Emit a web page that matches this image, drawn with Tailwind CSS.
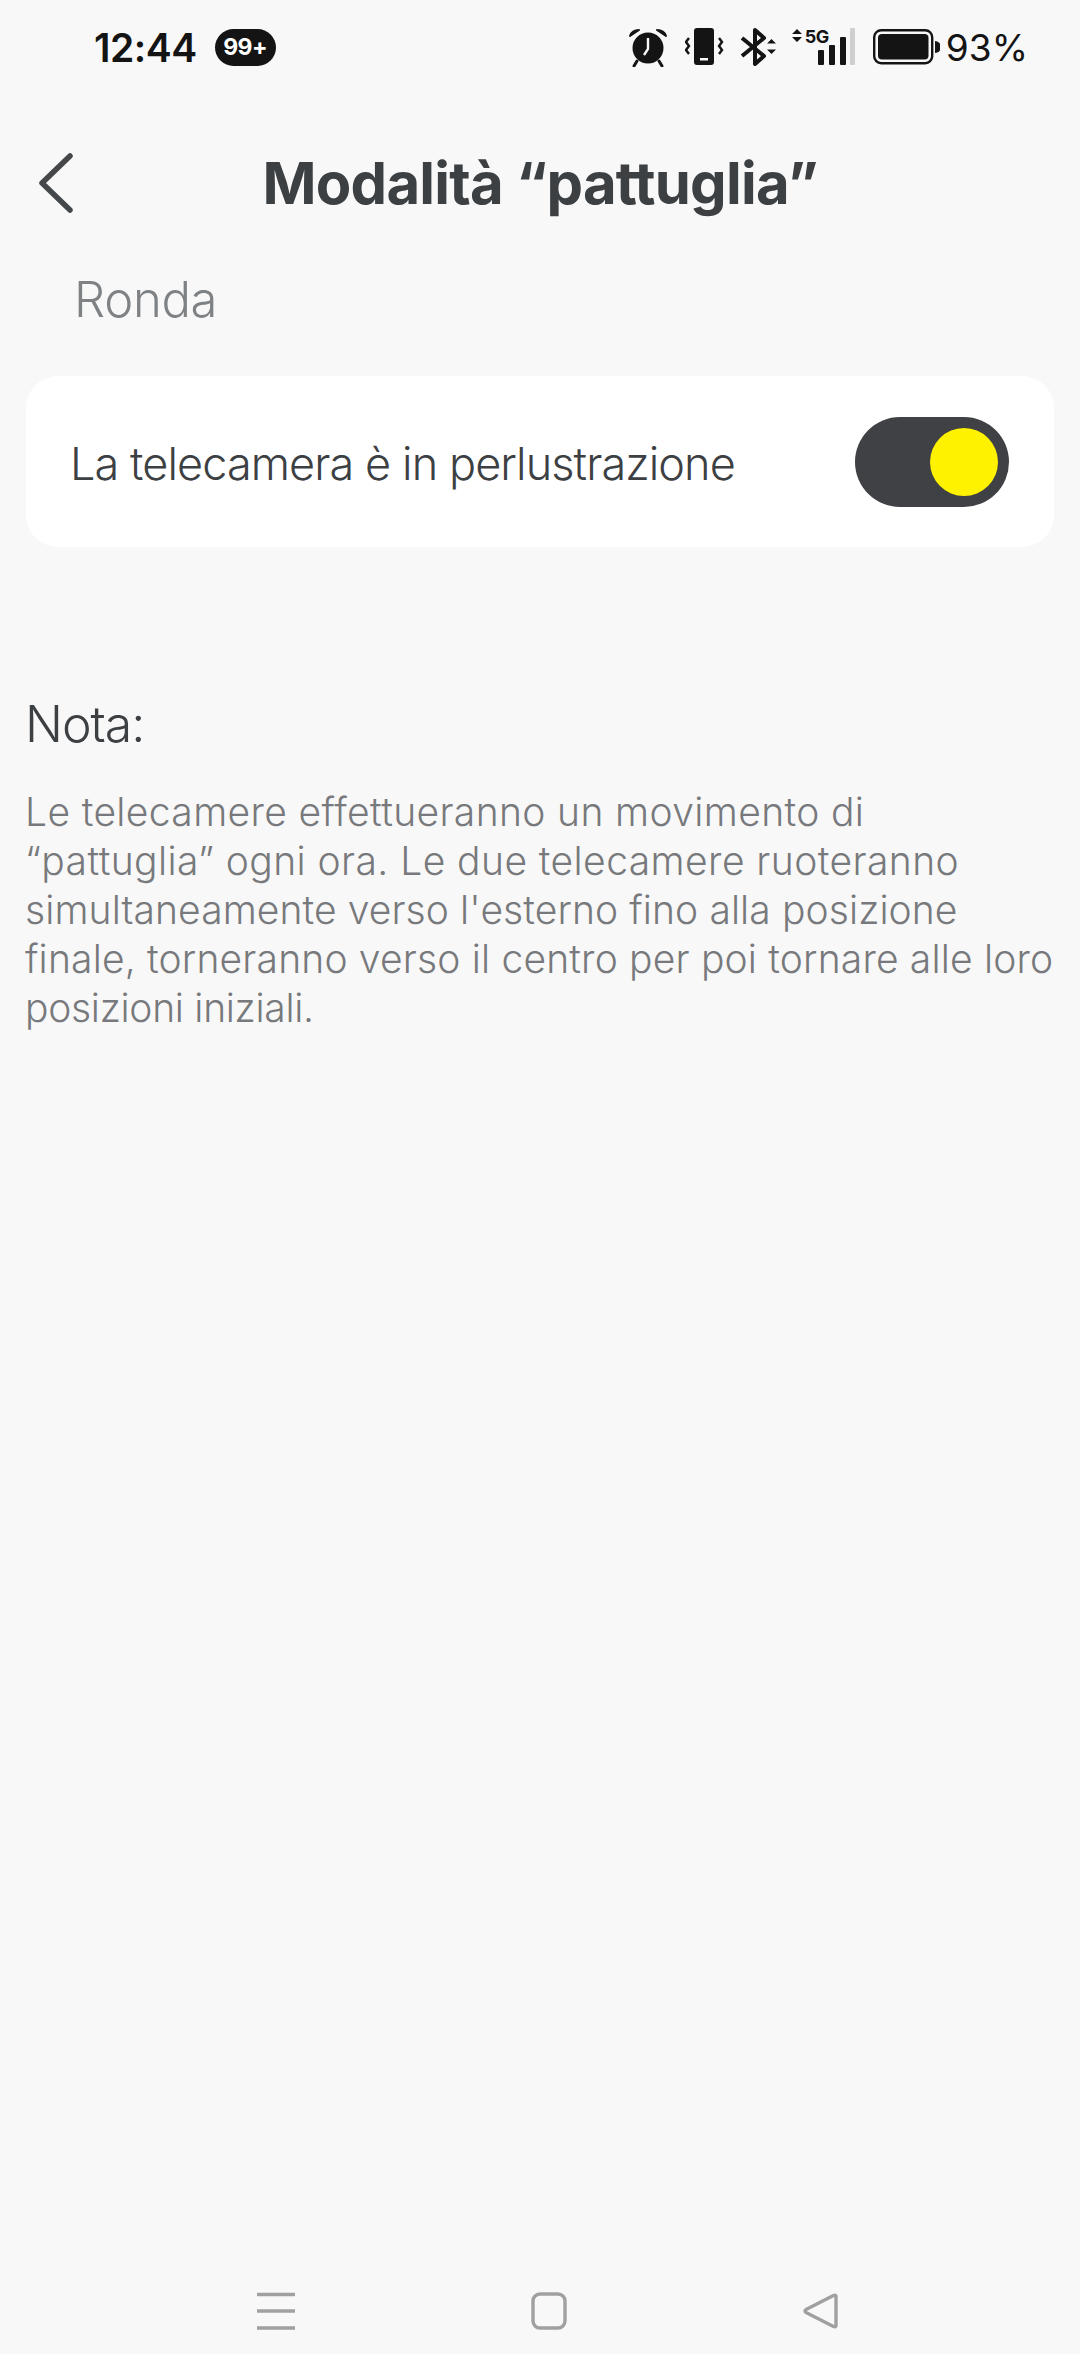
<!DOCTYPE html>
<html lang="it"><head><meta charset="utf-8"><script src="https://cdn.jsdelivr.net/npm/@tailwindcss/browser@4"></script></head>
<body class="m-0">
<div class="w-[1080px] h-[2354px] bg-[#f8f8f8] flex flex-col font-['Inter',sans-serif] overflow-hidden">
  <!-- status bar -->
  <div class="h-[94px] flex items-center justify-between pl-[94px] pr-[52px] text-[#141414]">
    <div class="flex items-center gap-[18px]">
      <span class="text-[39px] leading-none font-semibold tracking-[-0.5px]">12:44</span>
      <span class="w-[61px] h-[37px] rounded-full bg-[#141414] text-white text-[23px] font-bold flex items-center justify-center tracking-[-0.5px]">99+</span>
    </div>
    <div class="flex items-center">
      <svg width="40" height="40" viewBox="0 0 40 40" class="mr-[17px]"><circle cx="20" cy="21" r="15.500" fill="#141414"/><path d="M20 11v11l-4 6" stroke="#f8f8f8" stroke-width="2.400" fill="none"/><path d="M2 9q2-6 9-6zM38 9q-2-6-9-6z" fill="#141414" stroke="#141414" stroke-width="2" stroke-linejoin="round"/><path d="M9 34l-3 5M31 34l3 5" stroke="#141414" stroke-width="3" stroke-linecap="round"/></svg>
      <svg width="40" height="38" viewBox="0 0 40 38" class="mr-[15px]"><rect x="9" y="0" width="20" height="37" rx="3" fill="#141414"/><rect x="15" y="30" width="8" height="2.500" fill="#f8f8f8"/><path d="M4 10l-3 4 3 4-3 4 3 4M34 10l3 4-3 4 3 4-3 4" stroke="#141414" stroke-width="2.400" fill="none"/></svg>
      <svg width="38" height="38" viewBox="0 0 38 38" class="mr-[14px]"><path d="M2 10l22 18-9 8V2l9 8L2 28" stroke="#141414" stroke-width="4" fill="none" stroke-linejoin="round"/><path d="M27 15.500l4.500-4.500 4.500 4.500zM27 21.500l4.500 4.500 4.500-4.500z" fill="#141414" /></svg>
      <div class="relative w-[64px] h-[38px] mr-[16px] -translate-y-[1px]">
        <svg width="64" height="38" viewBox="0 0 64 38" class="absolute left-0 top-0"><path d="M0 7l5-5 5 5zM0 10l5 5 5-5z" fill="#141414"/><rect x="26" y="23" width="6" height="15" rx="1" fill="#141414"/><rect x="37" y="18" width="6" height="20" rx="1" fill="#141414" /><rect x="48" y="10" width="6" height="28" rx="1" fill="#141414"/><rect x="58" y="1" width="5" height="37" rx="1" fill="#cfcfcf"/></svg>
        <span class="absolute left-[13px] top-[0px] text-[18px] leading-[20px] font-bold tracking-[-0.5px]">5G</span>
      </div>
      <svg width="68" height="36" viewBox="0 0 66 36" class="mr-[6px]"><rect x="1.200" y="1.200" width="58" height="33" rx="7" fill="none" stroke="#141414" stroke-width="2.400"/><rect x="5" y="5" width="50.500" height="25.500" rx="4" fill="#141414"/><path d="M62 12a6 6 0 0 1 0 12z" fill="#141414"/></svg>
      <span class="text-[37px] leading-none font-normal">93%</span>
    </div>
  </div>
  <!-- header -->
  <div class="relative mt-[43px] h-[92px] flex items-center justify-center">
    <svg width="40" height="62" viewBox="0 0 40 62" class="absolute left-[37px] top-[15px]"><path d="M33 4L5 31l28 27" fill="none" stroke="#45484b" stroke-width="5.500" stroke-linecap="round" stroke-linejoin="round"/></svg>
    <h1 class="text-[58px] leading-none font-bold text-[#3d4043] tracking-[-0.75px]">Modalità “pattuglia”</h1>
  </div>
  <div class="pl-[74px] mt-[41px] h-[60px] text-[49px] leading-[60px] font-light text-[#7f8285] tracking-[-0.3px]">Ronda</div>
  <!-- card -->
  <div class="mx-[26px] mt-[46px] h-[171px] rounded-[32px] bg-white flex items-center justify-between pl-[44px] pr-[45px]">
    <span class="text-[45px] leading-none font-light text-[#3d4043] tracking-[-0.9px] pt-[4px]">La telecamera è in perlustrazione</span>
    <div class="w-[154px] h-[90px] rounded-full bg-[#3f4144] flex items-center justify-end pr-[11px]">
      <div class="w-[68px] h-[68px] rounded-full bg-[#fff200]"></div>
    </div>
  </div>
  <div class="pl-[25px] mt-[147px] text-[50px] leading-[60px] font-light text-[#3d4043] tracking-[-1px]">Nota:</div>
  <div class="ml-[25px] mt-[33px] text-[39px] leading-[49px] font-light text-[#77797c] whitespace-nowrap">
    <p class="tracking-[0.37px]">Le telecamere effettueranno un movimento di</p>
    <p class="tracking-[0.43px]">“pattuglia” ogni ora. Le due telecamere ruoteranno</p>
    <p class="tracking-[0.1px]">simultaneamente verso l'esterno fino alla posizione</p>
    <p class="tracking-[0.18px]">finale, torneranno verso il centro per poi tornare alle loro</p>
    <p class="tracking-[-0.29px]">posizioni iniziali.</p>
  </div>
  <!-- nav -->
  <div class="mt-auto h-[62px] flex items-start pl-[257px]">
    <svg width="38" height="38" viewBox="0 0 38 38"><path d="M0 2.500h38M0 19h38M0 36h38" stroke="#a0a0a0" stroke-width="3.400"/></svg>
    <svg width="36" height="38" viewBox="0 0 36 38" class="ml-[236px]"><rect x="2" y="2" width="32" height="34" rx="7" fill="none" stroke="#a0a0a0" stroke-width="3.400"/></svg>
    <svg width="36" height="38" viewBox="0 0 36 38" class="ml-[236px]"><path d="M33 4.500v29q0 2-2.500 1L3 20.500q-2-1.500 0-3L30.500 3.500q2.500-1 2.500 1z" fill="none" stroke="#a0a0a0" stroke-width="3.400" stroke-linejoin="round"/></svg>
  </div>
</div>
</body></html>
